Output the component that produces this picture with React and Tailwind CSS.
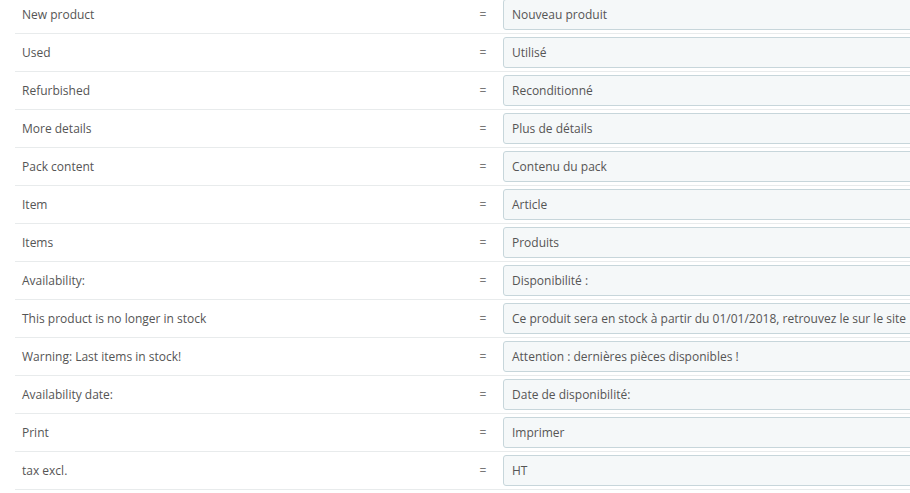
const rows = [
  ['New product', 'Nouveau produit'],
  ['Used', 'Utilisé'],
  ['Refurbished', 'Reconditionné'],
  ['More details', 'Plus de détails'],
  ['Pack content', 'Contenu du pack'],
  ['Item', 'Article'],
  ['Items', 'Produits'],
  ['Availability:', 'Disponibilité :'],
  ['This product is no longer in stock', 'Ce produit sera en stock à partir du 01/01/2018, retrouvez le sur le site'],
  ['Warning: Last items in stock!', 'Attention : dernières pièces disponibles !'],
  ['Availability date:', 'Date de disponibilité:'],
  ['Print', 'Imprimer'],
  ['tax excl.', 'HT'],
]

export default function App() {
  return (
    <div className="w-[910px] h-[493px] overflow-hidden bg-white font-['Open_Sans',sans-serif] text-[12px] text-[#555]">
      <div className="-mt-[4px] ml-[15px]">
        {rows.map(([label, value]) => (
          <div key={label} className="flex items-center h-[38px] py-[3px] border-b border-[#e8ebec]">
            <div className="w-[459px] shrink-0 pl-[7px] truncate">{label}</div>
            <div className="w-[18px] shrink-0 text-center text-[#777]">=</div>
            <div className="ml-[11px] w-[440px] shrink-0 h-[31px] flex items-center pl-2 border border-[#c7d6db] rounded-[3px] bg-[#f5f8f9] whitespace-nowrap overflow-hidden">
              {value}
            </div>
          </div>
        ))}
      </div>
    </div>
  )
}
